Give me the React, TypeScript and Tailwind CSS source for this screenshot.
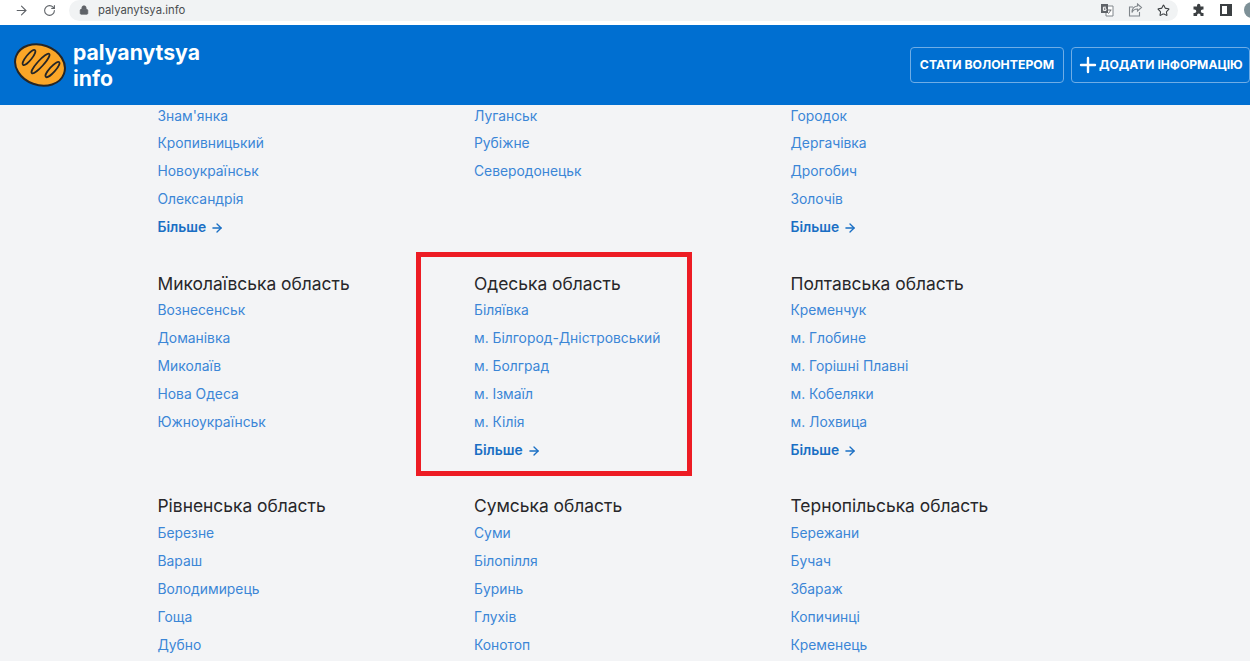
import { ArrowRight, Lock, Plus, RotateCw, Star } from 'lucide-react';

type Region = {
  title?: string;
  links: string[];
  more?: boolean;
  marked?: boolean;
};

const rows: Region[][] = [
  [
    { links: ["Знам'янка", 'Кропивницький', 'Новоукраїнськ', 'Олександрія'], more: true },
    { links: ['Луганськ', 'Рубіжне', 'Северодонецьк'] },
    { links: ['Городок', 'Дергачівка', 'Дрогобич', 'Золочів'], more: true },
  ],
  [
    {
      title: 'Миколаївська область',
      links: ['Вознесенськ', 'Доманівка', 'Миколаїв', 'Нова Одеса', 'Южноукраїнськ'],
    },
    {
      title: 'Одеська область',
      links: ['Біляївка', 'м. Білгород-Дністровський', 'м. Болград', 'м. Ізмаїл', 'м. Кілія'],
      more: true,
      marked: true,
    },
    {
      title: 'Полтавська область',
      links: ['Кременчук', 'м. Глобине', 'м. Горішні Плавні', 'м. Кобеляки', 'м. Лохвица'],
      more: true,
    },
  ],
  [
    { title: 'Рівненська область', links: ['Березне', 'Вараш', 'Володимирець', 'Гоща', 'Дубно'] },
    { title: 'Сумська область', links: ['Суми', 'Білопілля', 'Буринь', 'Глухів', 'Конотоп'] },
    { title: 'Тернопільська область', links: ['Бережани', 'Бучач', 'Збараж', 'Копичинці', 'Кременець'] },
  ],
];

const BreadLogo = () => (
  <svg width="54" height="46" viewBox="0 0 54 46" className="shrink-0">
    <ellipse cx="27" cy="23" rx="25.5" ry="20" transform="rotate(20 27 23)" fill="#fba627" stroke="#262626" strokeWidth="2" />
    <ellipse cx="16" cy="15.500" rx="2.8" ry="9.500" transform="rotate(39 16 15.500)" fill="none" stroke="#262626" strokeWidth="1.7" />
    <ellipse cx="27.500" cy="21.500" rx="3" ry="13" transform="rotate(42 27.500 21.500)" fill="none" stroke="#262626" strokeWidth="1.7" />
    <ellipse cx="39.500" cy="27.500" rx="2.8" ry="10" transform="rotate(42 39.500 27.500)" fill="none" stroke="#262626" strokeWidth="1.7" />
  </svg>
);

const TranslateIcon = () => (
  <svg width="14" height="14" viewBox="0 0 14 14" className="shrink-0">
    <path d="M6 3h7v10H6z" fill="#fff" stroke="#80868b" strokeWidth="1" />
    <path d="M1 1h7v9H1z" fill="#5f6368" />
    <path d="M6 4.2H3.4v3.2H6V5.8H4.6" fill="none" stroke="#fff" strokeWidth="1" />
    <path d="M8 7h3.5M10.5 7c-.3 1.6-1.2 2.8-2.4 3.6" fill="none" stroke="#5f6368" strokeWidth="0.9" />
  </svg>
);

const ShareIcon = () => (
  <svg width="15" height="14" viewBox="0 0 15 14" fill="none" stroke="#80868b" strokeWidth="1.1" className="shrink-0">
    <path d="M5 4H1.5v9h10V9" />
    <path d="M9.5 1l4 3.5-4 3.5V6C7 6 5 7 4 9.5 4 6 6 3.3 9.5 3z" />
  </svg>
);

const PuzzleIcon = () => (
  <svg width="14" height="14" viewBox="0 0 14 14" fill="#3c4043" className="shrink-0">
    <path d="M5 2.5a1.7 1.7 0 0 1 3.4 0V3.500h3.100v3h-.9a1.800 1.800 0 0 0 0 3.600h.9v3H8.500v-1a1.700 1.700 0 0 0-3.400 0v1H1.500V10h1a1.800 1.800 0 0 0 0-3.600h-1V3.500H5z" />
  </svg>
);

const BrowserBar = () => (
  <div className="flex h-[25px] items-center overflow-hidden bg-white pb-[5px] text-[#5f6368]">
    <div className="h-[1.500px] w-[2px] bg-[#c4c7ca]" />
    <ArrowRight size={15} strokeWidth={1.7} className="ml-[14px] shrink-0" />
    <RotateCw size={13} strokeWidth={2} className="ml-[14px] shrink-0" />
    <div className="ml-[13px] flex h-[21px] w-[1109px] shrink-0 items-center rounded-full bg-[#f1f3f4] pr-[8px] pl-[10px]">
      <Lock size={10} fill="#5f6368" />
      <span className="ml-[9px] text-[11.300px] text-[#4a4d50]">palyanytsya.info</span>
      <div className="ml-auto flex items-center gap-[14px]">
        <TranslateIcon />
        <ShareIcon />
        <Star size={13} strokeWidth={2} className="text-[#3c4043]" />
      </div>
    </div>
    <div className="ml-[14px]">
      <PuzzleIcon />
    </div>
    <div className="ml-[14px] h-[12px] w-[12px] shrink-0 border-2 border-r-[5px] border-[#3c4043]" />
    <div className="ml-[12px] h-[16px] w-[16px] shrink-0 rounded-full bg-[#7d9097]" />
  </div>
);

const Header = () => (
  <header className="relative z-10 flex h-[80px] items-center justify-between overflow-hidden bg-[#006fd1] pl-[13px] text-white">
    <div className="flex items-center gap-[6px]">
      <BreadLogo />
      <div className="text-[21.200px] leading-[26px] font-bold">
        <div>palyanytsya</div>
        <div>info</div>
      </div>
    </div>
    <div className="flex gap-[7px]">
      <div className="flex h-[36px] w-[154px] items-center justify-center rounded-[4px] border border-[#6fade6] text-[12.250px] font-bold">
        СТАТИ ВОЛОНТЕРОМ
      </div>
      <div className="flex h-[36px] w-[179px] items-center rounded-[4px] border border-[#6fade6] pl-[4px] text-[12.100px] font-bold whitespace-nowrap">
        <Plus size={24} strokeWidth={2.4} className="mr-[-1px] shrink-0" />
        ДОДАТИ ІНФОРМАЦІЮ
      </div>
    </div>
  </header>
);

const RegionColumn = ({ title, links, more, marked }: Region) => (
  <div className="relative w-[316.500px] text-[13.850px] leading-[27.850px]">
    {title && <h3 className="text-[17.400px] text-[#27272a]">{title}</h3>}
    {links.map((link) => (
      <a key={link} className="block text-[#3b86d6]">
        {link}
      </a>
    ))}
    {more && (
      <a className="flex items-center gap-[4px] font-semibold text-[#1a6fc4]">
        Більше <ArrowRight size={14} strokeWidth={2.3} />
      </a>
    )}
    {marked && (
      <div className="absolute top-[-18px] left-[-58px] h-[224px] w-[276px] border-[5.500px] border-[#ed1c24]" />
    )}
  </div>
);

export default function App() {
  return (
    <div className="h-[661px] w-[1250px] overflow-hidden bg-[#f3f4f6] font-['Inter',sans-serif]">
      <BrowserBar />
      <Header />
      <main className="mt-[-2.500px] flex flex-col gap-[27.850px] pl-[157.500px]">
        {rows.map((row, i) => (
          <div key={i} className="flex">
            {row.map((region, j) => (
              <RegionColumn key={j} {...region} />
            ))}
          </div>
        ))}
      </main>
    </div>
  );
}
